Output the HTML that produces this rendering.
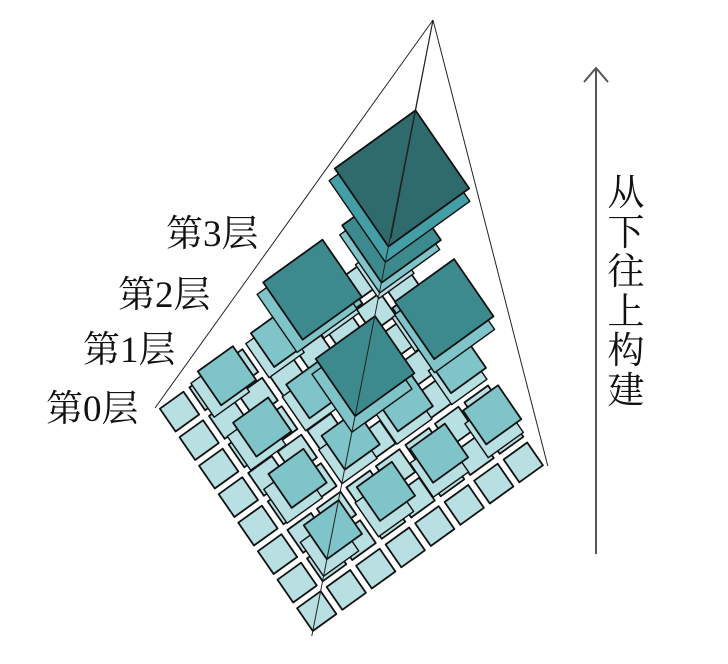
<!DOCTYPE html>
<html><head><meta charset="utf-8">
<style>
html,body{margin:0;padding:0;background:#fff;width:728px;height:664px;overflow:hidden}
.l{position:absolute;font-family:"Liberation Serif","Noto Serif CJK SC",serif;font-size:37px;line-height:40px;color:#111;white-space:nowrap}
.v{position:absolute;left:604px;top:174px;width:44px;font-family:"Liberation Serif","Noto Serif CJK SC",serif;font-size:37px;line-height:39.5px;color:#111;text-align:center}
</style></head><body>
<svg id="s" width="728" height="664" style="position:absolute;left:0;top:0"></svg>
<div class="l" style="left:166px;top:215px">第3层</div>
<div class="l" style="left:118px;top:276px">第2层</div>
<div class="l" style="left:83px;top:331px">第1层</div>
<div class="l" style="left:46px;top:390px">第0层</div>
<div class="v">从<br>下<br>往<br>上<br>构<br>建</div>
<script>
var s=document.getElementById('s'),out='';
var O=[155,408],V=[2.95,-2.125],U=[1.96,2.85],A=[433,20];
function P(x,y,h){var bx=O[0]+x*V[0]+y*U[0],by=O[1]+x*V[1]+y*U[1];return [(A[0]+(1-h)*(bx-A[0])).toFixed(1),(A[1]+(1-h)*(by-A[1])).toFixed(1)];}
function sq(x0,y0,sz,h,fill,sw){var pts=[P(x0,y0,h),P(x0+sz,y0,h),P(x0+sz,y0+sz,h),P(x0,y0+sz,h)];
out+='<polygon points="'+pts.map(function(p){return p.join(',')}).join(' ')+'" fill="'+fill+'" stroke="#111" stroke-width="'+(sw||1.6)+'" stroke-linejoin="round"/>';}
var L=[{n:8,h:0,f:0.8,c:'#b8dfe2'},{n:4,h:0.1,f:0.66,c:'#7ec4c8'},{n:2,h:0.33,f:0.75,c:'#3c8a8e'},{n:1,h:0.62,f:0.9,c:'#2f6a6c'}];
L.forEach(function(l,k){var cell=80/l.n;
 if(k>0){
   var hh=l.h-0.03;var col=k==3?'#449ea5':(k==2?'#7ec4c8':'#b8dfe2');
   for(var i=0;i<l.n;i++)for(var j=0;j<l.n;j++){var sz=cell*l.f*0.97,m=(cell-sz)/2;sq(i*cell+m,j*cell+m,sz,hh,col,1.4);}
 }
 for(var i=0;i<l.n;i++)for(var j=0;j<l.n;j++){var sz=cell*l.f,m=(cell-sz)/2;sq(i*cell+m,j*cell+m,sz,l.h,l.c,1.8);}
});
var c0=P(0,0,0),c1=P(80,0,0),c2=P(80,80,0),c3=P(0,80,0);
[c0,c1,c2,c3].forEach(function(c){out+='<line x1="433" y1="20" x2="'+c[0]+'" y2="'+c[1]+'" stroke="#222" stroke-width="1"/>';});
out+='<line x1="596" y1="68" x2="596" y2="554" stroke="#555" stroke-width="2"/><polyline points="584,82 596,68 608,82" fill="none" stroke="#555" stroke-width="2"/>';
s.innerHTML=out;
</script>
</body></html>
